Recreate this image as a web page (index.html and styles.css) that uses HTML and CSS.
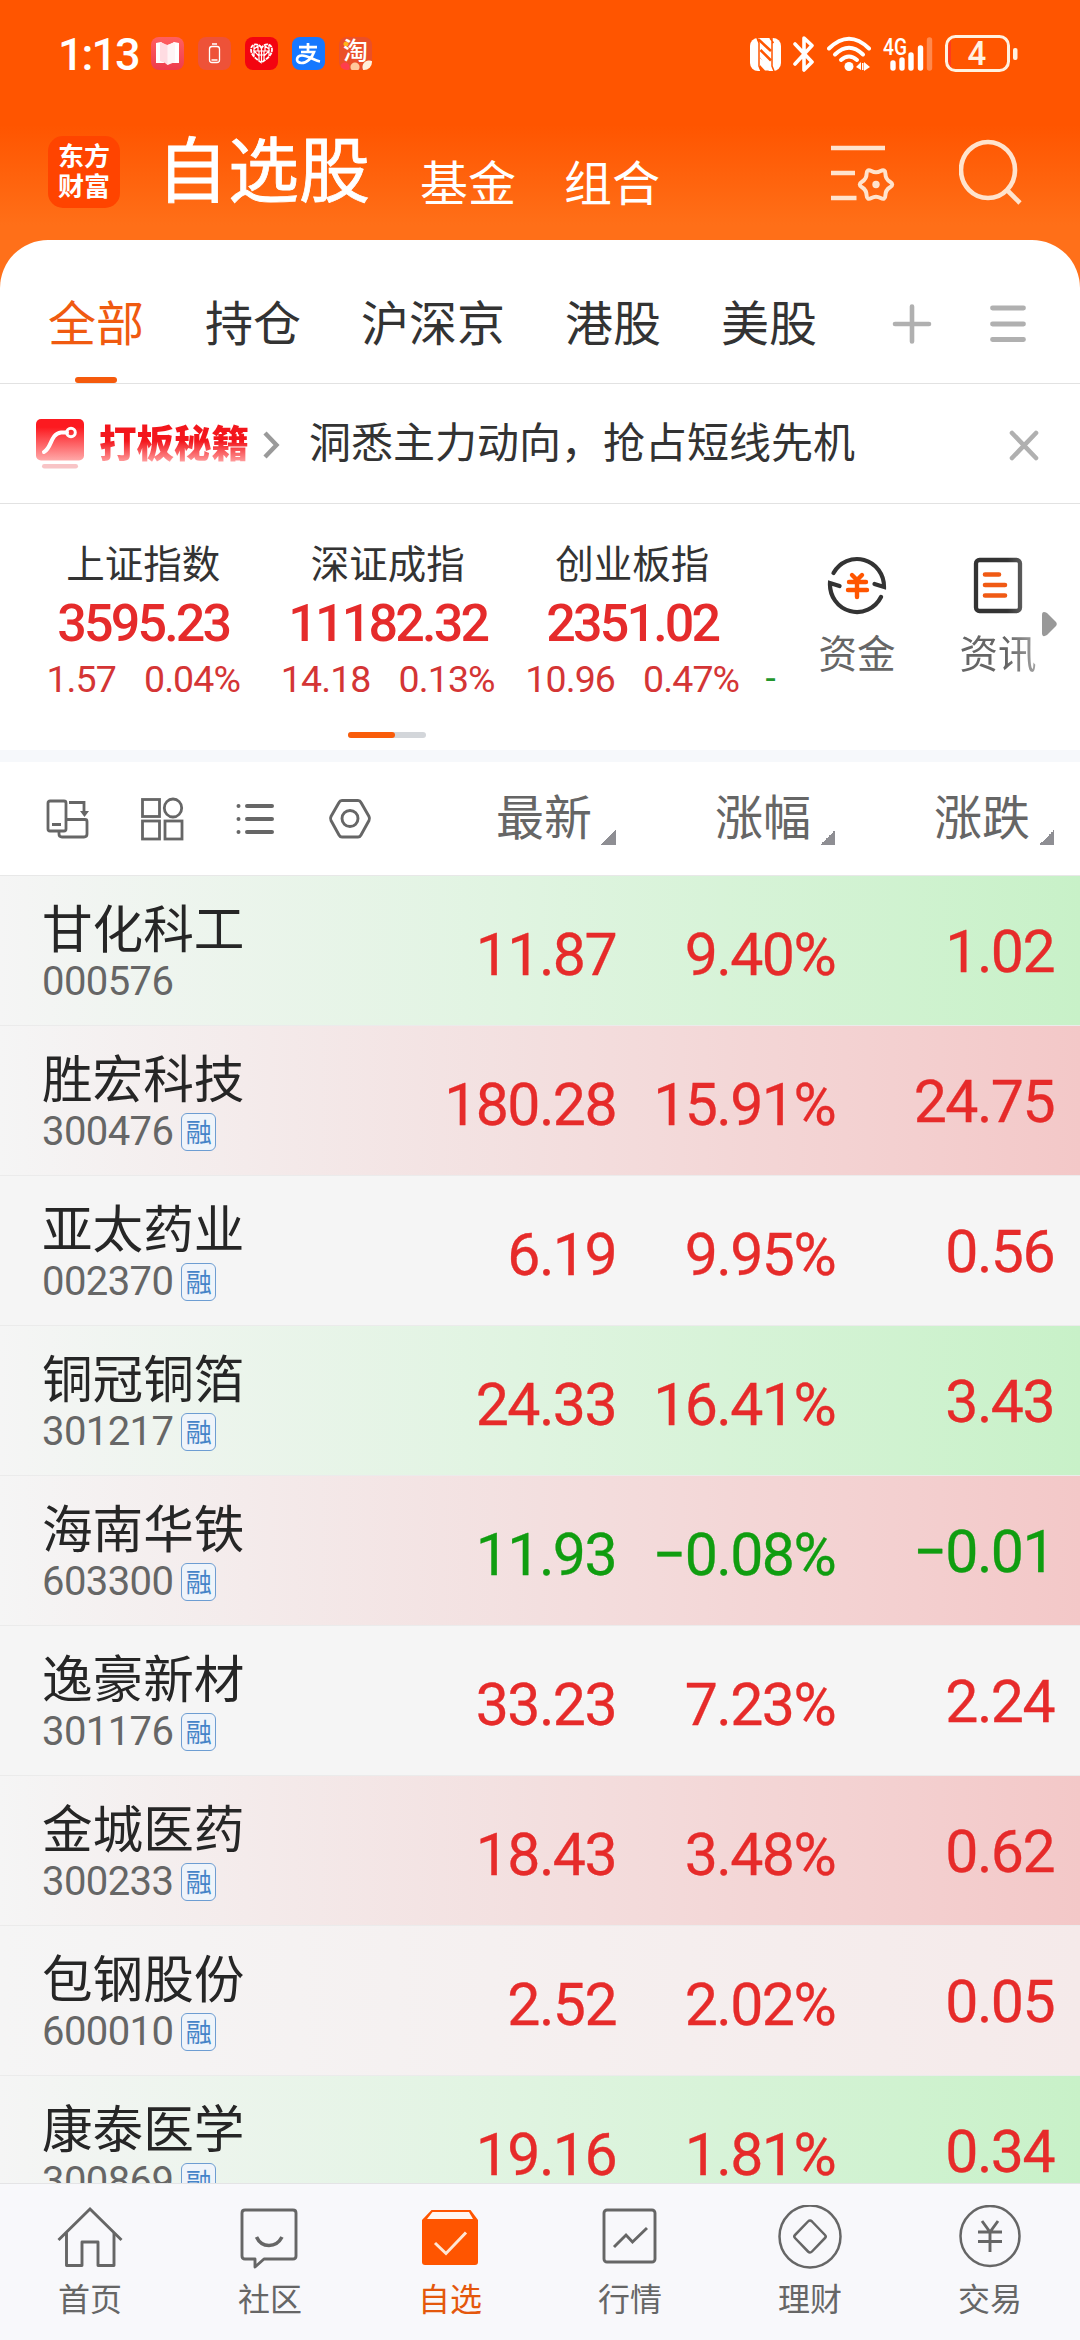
FILE: index.html
```html
<!DOCTYPE html>
<html lang="zh-CN">
<head>
<meta charset="utf-8">
<title>自选股</title>
<link rel="stylesheet" href="styles.css">
</head>
<body>
<div class="app">
  <header class="header">
    <div class="status">
      <span class="clock">1:13</span>
      <div class="notices">
        <svg width="33" height="33" viewBox="0 0 33 33"><defs><linearGradient id="bk" x1="0" y1="0" x2="0" y2="1"><stop offset="0" stop-color="#ff6060"/><stop offset="1" stop-color="#ee3c4c"/></linearGradient></defs><rect width="33" height="33" rx="8" fill="url(#bk)"/><path d="M5 6l5-1 3 2v19H5zM28 6l-5-1-3 2v19h8z" fill="#fff"/><path d="M9 5l7.500 3L24 5v19l-5 2-2.500 2-2.500-2-5-2z" fill="#ffdce2"/><path d="M16.500 8L24 5v20l-7.500 3z" fill="#fff4f5"/></svg>
        <svg width="33" height="33" viewBox="0 0 33 33"><rect width="33" height="33" rx="8" fill="#ee5238"/><rect x="11.500" y="9.500" width="10" height="16" rx="2.500" fill="none" stroke="#fff" stroke-width="1.300"/><path d="M14 7h5M13.500 23h6" stroke="#fff" stroke-width="1.600"/></svg>
        <svg width="33" height="33" viewBox="0 0 33 33"><rect width="33" height="33" rx="8" fill="#f30410"/><path d="M16.500 11C14 6 6 6 6 12.500c0 6 6 10 10.500 13 4.500-3 10.500-7 10.500-13C27 6 19 6 16.500 11z" fill="none" stroke="#fff" stroke-width="1.800" stroke-dasharray="4 .7"/><path d="M9 8v11M9 12l4-3v5H9l5 5v4M16.500 11v14M14 14h5v4h-5zM24 8v11M24 12l-4-3v5h4l-5 5v4" fill="none" stroke="#fff" stroke-width="1.200"/></svg>
        <svg width="33" height="33" viewBox="0 0 33 33"><rect width="33" height="33" rx="8" fill="#1678ff"/><path d="M7 10.200h18M16 6v9M9 15h13c-2 6-7 11-12.500 11C3 26 4 18.500 10 18.500c6 0 12 5 18 6" fill="none" stroke="#fff" stroke-width="2.700"/></svg>
        <span class="tao">淘</span>
      </div>
      <div class="signals">
        <svg width="31" height="33" viewBox="0 0 31 33"><rect width="31" height="33" rx="8" fill="#fff"/><path d="M7 0l2 5v23l2 5M22 0v28l2 5M20 0l3.500 5" fill="none" stroke="#ff5500" stroke-width="1.500"/><path d="M8 1l13 12M10.500 12L21 22.500" stroke="#ff5500" stroke-width="2.600"/><path d="M10 19.500V33h9z" fill="#ff5500"/><path d="M10 20l12 12.500h-7L10 27z" fill="#fff"/></svg>
        <svg width="22" height="36" viewBox="0 0 22 36"><path d="M2 8l17 18-8 8V2l8 7.500L2 28" fill="none" stroke="#fff" stroke-width="3.600" stroke-linejoin="round" stroke-linecap="round"/></svg>
        <svg width="44" height="36" viewBox="0 0 44 36"><g fill="none" stroke="#fff" stroke-width="4" stroke-linecap="round"><path d="M2 12.500Q22-7 42 12.500"/><path d="M8 18.500Q22 5 36 18.500"/><path d="M14 24Q22 17 30 24"/></g><circle cx="22" cy="30.500" r="4.500" fill="#fff"/><path d="M29 31l5-5v8zM37 26l6 5-6 4zM35 27h1.500v7H35z" fill="#fff"/></svg>
        <svg class="cell" width="50" height="36" viewBox="0 0 50 36"><g stroke="#fff" stroke-width="5.400" stroke-linecap="round"><path d="M10 27v5M19 24v8M28 19v13M37.500 12v20"/><path d="M46.500 4v28" opacity=".3"/></g><text x="0" y="18.500" class="net" textLength="24" lengthAdjust="spacingAndGlyphs">4G</text></svg>
        <svg width="73" height="38" viewBox="0 0 73 38"><path d="M6 5q-3 3-3 14t3 14z" fill="#ff3b1f"/><rect x="1.500" y="1.500" width="62" height="34" rx="9" fill="none" stroke="#fff2e0" stroke-width="3"/><rect x="68" y="13" width="4.500" height="12" rx="2" fill="#fff2e0"/><text x="32" y="30" class="lvl" text-anchor="middle">4</text></svg>
      </div>
    </div>
    <div class="topbar">
      <div class="logo">东方<br>财富</div>
      <span class="title">自选股</span>
      <span class="sub">基金</span>
      <span class="sub">组合</span>
      <svg class="manage" width="64" height="58" viewBox="0 0 64 58" fill="none" stroke="#ffe3cd" stroke-width="4.600"><path d="M0 3h54M0 28h24M0 53h25.500"/><path d="M59 42.250Q54.500 45 54.400 50.250Q54.250 55.500 49.600 53Q45 50.500 40.400 53Q35.750 55.500 35.600 50.250Q35.500 45 31 42.250Q26.500 39.500 31 36.750Q35.500 34 35.600 28.750Q35.750 23.500 40.400 26Q45 28.500 49.600 26Q54.250 23.500 54.400 28.750Q54.500 34 59 36.750Q63.500 39.500 59 42.250z" stroke-width="4" stroke-linejoin="round"/><circle cx="45" cy="39.500" r="3.700" fill="#ffe3cd" stroke="none"/></svg>
      <svg width="64" height="66" viewBox="0 0 64 66" fill="none" stroke="#ffe3cd" stroke-width="4.600"><ellipse cx="29" cy="31" rx="27" ry="28"/><path d="M48 51l13 13"/></svg>
    </div>
  </header>

  <main class="sheet">
    <nav class="tabs">
      <span class="tab on">全部</span><span class="tab">持仓</span><span class="tab">沪深京</span><span class="tab">港股</span><span class="tab">美股</span>
      <svg class="plus" width="40" height="40" viewBox="0 0 40 40" stroke="#b0b0b0" stroke-width="4.600" stroke-linecap="round"><path d="M3 20h34M20 2.500v35"/></svg>
      <svg class="menu" width="36" height="38" viewBox="0 0 36 38" stroke="#b0b0b0" stroke-width="4.800" stroke-linecap="round"><path d="M2.500 3h31M2.500 19h31M2.500 34.500h31"/></svg>
    </nav>

    <section class="promo">
      <svg class="promo-logo" width="48" height="50" viewBox="0 0 48 50"><defs><linearGradient id="pl" x1="0" y1="0" x2="0" y2="1"><stop offset=".2" stop-color="#fc1a20"/><stop offset="1" stop-color="#ffa9a9"/></linearGradient></defs><rect width="48" height="41.500" rx="5" fill="url(#pl)"/><path d="M8 33c8-4 6-18 17-19.500h6" fill="none" stroke="#fff" stroke-width="4" stroke-linecap="round"/><circle cx="35" cy="13.500" r="4.300" fill="none" stroke="#fff" stroke-width="3"/><rect x="6" y="45" width="36" height="4.500" rx="2.200" fill="#f8c4c6"/></svg>
      <span class="promo-name">打板秘籍</span>
      <svg class="chev" width="17" height="28" viewBox="0 0 17 28" fill="none" stroke="#9a9a9a" stroke-width="4.400"><path d="M2 2l11.500 12L2 26"/></svg>
      <span class="slogan">洞悉主力动向，抢占短线先机</span>
      <svg class="close" width="30" height="31" viewBox="0 0 30 31" stroke="#b0b0b0" stroke-width="4.600" stroke-linecap="round"><path d="M3 3l24 25M27 3L3 28"/></svg>
    </section>

    <section class="market">
      <div class="indices">
        <div class="index"><div class="iname">上证指数</div><div class="ival">3595.23</div><div class="ichg"><span>1.57</span><span>0.04%</span></div></div>
        <div class="index"><div class="iname">深证成指</div><div class="ival">11182.32</div><div class="ichg"><span>14.18</span><span>0.13%</span></div></div>
        <div class="index"><div class="iname">创业板指</div><div class="ival">2351.02</div><div class="ichg"><span>10.96</span><span>0.47%</span></div></div>
        <div class="next">-</div>
      </div>
      <div class="tools">
        <div class="tool"><svg width="60" height="60" viewBox="0 0 60 60" fill="none"><g stroke="#333" stroke-width="4.200" stroke-linecap="round"><path d="M6.500 18A27 27.500 0 0 1 57 32l-9.500-3" stroke-linejoin="miter"/><path d="M54 42A27 27.500 0 0 1 3 28l9.500 3"/></g><g stroke="#ff5500" stroke-width="4.400" stroke-linecap="round"><path d="M25 20l5 5 5-5M22 27h17M21 35h19M30 26v16"/></g></svg><span>资金</span></div>
        <div class="tool fade"><svg width="60" height="60" viewBox="0 0 60 60" fill="none"><rect x="8" y="5" width="44" height="51" rx="3.500" stroke="#333" stroke-width="4.300"/><path d="M17 19.500h14M17 30h20M17 40.500h20" stroke="#f05a14" stroke-width="4.600" stroke-linecap="round"/></svg><span>资讯</span></div>
        <svg class="more" width="15" height="26" viewBox="0 0 15 26"><path d="M0 4Q0-1 5 2l9 9q1.500 2 0 4l-9 9Q0 27 0 22z" fill="#999"/></svg>
      </div>
      <div class="pager"><i></i></div>
    </section>

    <section class="list">
      <div class="cols">
        <div class="views">
          <svg width="44" height="42" viewBox="0 0 44 42" fill="none" stroke="#666" stroke-width="2.800"><rect x="2" y="3" width="18" height="30" rx="2"/><path d="M20 21.500h19q2 0 2 2V36q0 3-3 3H16q-3 0-3-3v-3M23 4.500h15v10M6 26.500h9"/><path d="M34 13h9l-4.500 6z" fill="#666" stroke="none"/></svg>
          <svg width="44" height="44" viewBox="0 0 44 44" fill="none" stroke="#666" stroke-width="2.800"><rect x="2.500" y="2.500" width="17" height="17"/><rect x="2.500" y="24" width="17" height="18"/><rect x="25" y="24" width="17" height="18"/><ellipse cx="33" cy="11" rx="8.700" ry="9"/></svg>
          <svg width="42" height="34" viewBox="-1 0 42 34" stroke="#666" stroke-width="4" stroke-linecap="round"><path d="M12 4h25M12 17h25M12 30h25M3.500 4v.1M3.500 17v.1M3.500 30v.1"/></svg>
          <svg width="46" height="42" viewBox="-2 0 46 42" fill="none" stroke="#666" stroke-width="2.900"><path d="M14 2.500h16q2 0 3 2l8 14q1 2 0 4l-8 14.500q-1 2-3 2H14q-2 0-3-2L3 22.500q-1-2 0-4l8-14q1-2 3-2z"/><circle cx="22" cy="20.500" r="8"/></svg>
        </div>
        <span class="col">最新</span><span class="col">涨幅</span><span class="col">涨跌</span>
      </div>
      <div class="row green"><div class="who"><b>甘化科工</b><span>000576</span></div><em>11.87</em><em>9.40%</em><em>1.02</em></div>
      <div class="row red"><div class="who"><b>胜宏科技</b><span>300476<i>融</i></span></div><em>180.28</em><em>15.91%</em><em>24.75</em></div>
      <div class="row"><div class="who"><b>亚太药业</b><span>002370<i>融</i></span></div><em>6.19</em><em>9.95%</em><em>0.56</em></div>
      <div class="row green"><div class="who"><b>铜冠铜箔</b><span>301217<i>融</i></span></div><em>24.33</em><em>16.41%</em><em>3.43</em></div>
      <div class="row red down"><div class="who"><b>海南华铁</b><span>603300<i>融</i></span></div><em>11.93</em><em>−0.08%</em><em>−0.01</em></div>
      <div class="row"><div class="who"><b>逸豪新材</b><span>301176<i>融</i></span></div><em>33.23</em><em>7.23%</em><em>2.24</em></div>
      <div class="row red"><div class="who"><b>金城医药</b><span>300233<i>融</i></span></div><em>18.43</em><em>3.48%</em><em>0.62</em></div>
      <div class="row pale"><div class="who"><b>包钢股份</b><span>600010<i>融</i></span></div><em>2.52</em><em>2.02%</em><em>0.05</em></div>
      <div class="row green"><div class="who"><b>康泰医学</b><span>300869<i>融</i></span></div><em>19.16</em><em>1.81%</em><em>0.34</em></div>
    </section>
  </main>

  <footer class="nav">
    <div class="item"><svg width="66" height="66" viewBox="0 0 66 66" fill="none" stroke="#666" stroke-width="2.900"><path d="M1.500 35L33 4l31.500 31"/><path d="M9.500 28v32.500H25V37h16v23.500h16V28" stroke-linejoin="round"/></svg>首页</div>
    <div class="item"><svg width="66" height="66" viewBox="0 0 66 66" fill="none" stroke="#666" stroke-width="2.900" stroke-linejoin="round"><path d="M8 5h48q3 0 3 3v43q0 3-3 3H27l-9 8v-8H8q-3 0-3-3V8q0-3 3-3z"/><path d="M19.500 32q4 8.500 12.500 8.500T45 32" stroke-width="3.600"/></svg>社区</div>
    <div class="item on"><svg width="66" height="66" viewBox="0 0 66 66"><path d="M14.500 5h39l7.500 10v42q0 3-3 3H8q-3 0-3-3V15z" fill="#ff5500"/><path d="M15.500 7H52l4 7H10z" fill="#fff6ef"/><path d="M18 38l11 10.500L49 27.500" fill="none" stroke="#ffe6d3" stroke-width="3"/></svg>自选</div>
    <div class="item"><svg width="66" height="66" viewBox="0 0 66 66" fill="none" stroke="#666" stroke-width="2.900"><rect x="7" y="5" width="51" height="52" rx="3"/><path d="M17 42l12-12 6.500 7L50 23"/></svg>行情</div>
    <div class="item"><svg width="66" height="66" viewBox="0 0 66 66" fill="none" stroke="#666" stroke-width="2.500"><ellipse cx="33" cy="31.500" rx="30.500" ry="31"/><path d="M35 16.500l13 13.500q1.500 1.500 0 3l-13 13.500q-2 2-4 0L18 33q-1.500-1.500 0-3l13-13.500q2-2 4 0z"/></svg>理财</div>
    <div class="item"><svg width="66" height="66" viewBox="0 0 66 66" fill="none" stroke="#666" stroke-width="2.500"><ellipse cx="33" cy="31" rx="29.500" ry="30"/><path d="M25 16l8 11 8-11M21 27h24M21 36.500h24M33 27v20" stroke-width="2.900"/></svg>交易</div>
  </footer>
</div>
</body>
</html>
```

FILE: styles.css
```css
* { box-sizing: border-box; }
body { margin: 0; background: #fff; }
svg { display: block; flex: none; }
.app {
  width: 1080px; height: 2340px; overflow: hidden;
  display: flex; flex-direction: column;
  font-family: "Noto Sans CJK SC", sans-serif; color: #333;
  background: #ff701a;
}

/* header */
.header { flex: none; height: 240px; background: linear-gradient(#ff5500 125px, #ff6f18 225px); color: #fff; }
.status { height: 108px; display: flex; align-items: center; padding: 0 62px 0 58px; }
.clock { width: 93px; font: 500 45px/60px Roboto, sans-serif; letter-spacing: -2px; white-space: nowrap; padding-top: 2px; }
.notices { display: flex; gap: 14px; margin-top: -2px; }
.tao {
  width: 33px; height: 33px; border-radius: 8px; text-align: center; font-size: 25px; font-weight: 500; line-height: 25px;
  background: radial-gradient(circle at 6px 30px, #ff3d4d 4px, transparent 5px), radial-gradient(circle at 16px 30px, #ffc89c 4px, transparent 5px), radial-gradient(circle at 30px 30px, #fff0dc 6px, transparent 7px), radial-gradient(circle at 7px 7px, #ffb41a 2px, transparent 3px), #ea4f28;
}
.signals { display: flex; align-items: center; gap: 12px; margin-left: auto; }
.cell { overflow: visible; }
.net { font: 500 23px Roboto, sans-serif; fill: #fff; }
.lvl { font: 500 33px Roboto, sans-serif; fill: #fff2e0; }
.topbar { height: 132px; display: flex; align-items: flex-start; padding: 0 0 0 48px; }
.logo {
  width: 72px; height: 72px; margin-top: 28px; padding-top: 4px; border-radius: 15px; background: #ff4400;
  font-size: 26px; font-weight: 700; line-height: 30px; text-align: center;
}
.title { margin-left: 37px; width: 219px; font-size: 71px; line-height: 80px; margin-top: 17px; -webkit-text-stroke: .8px #fff; white-space: nowrap; }
.sub { margin-left: 44px; width: 100px; font-size: 48px; line-height: 60px; margin-top: 42px; white-space: nowrap; }
.manage { margin: 37px 64px 0 167px; }
.manage + svg { margin-top: 31px; }

/* white sheet */
.sheet { flex: 1; min-height: 0; background: #fff; border-radius: 48px 48px 0 0; overflow: hidden; }
.tabs { height: 144px; display: flex; align-items: center; gap: 60px; padding: 0 0 0 49px; border-bottom: 1px solid #e2e2e2; }
.tab { font-size: 48px; height: 143px; line-height: 161px; white-space: nowrap; }
.tab.on { margin-left: -1px; margin-right: 1px; color: #f05a10; display: flex; flex-direction: column; align-items: center; }
.tab.on::after { content: ""; width: 42px; height: 6px; border-radius: 3px; background: #f55a0c; margin-top: -24px; }
.plus { margin-left: 15px; margin-top: 24px; }
.menu { margin-left: -2px; margin-top: 24px; }

.promo { height: 120px; display: flex; align-items: center; padding-left: 36px; border-bottom: 1px solid #e2e2e2; }
.promo-name {
  margin-left: 15px; width: 152px; font-size: 37.500px; font-weight: 900; line-height: 56px; margin-top: -6px; white-space: nowrap;
  background: linear-gradient(#f3161c 50%, #ffa0a0 88%); -webkit-background-clip: text; background-clip: text; color: transparent;
}
.chev { margin-left: 12px; margin-top: 3px; }
.slogan { margin-left: 29px; width: 548px; font-size: 42px; line-height: 60px; margin-top: -7px; white-space: nowrap; }
.close { margin-left: 152px; margin-top: 3px; }

.market { height: 258px; display: grid; grid-template-columns: 790px 290px; grid-template-rows: 228px 18px; border-bottom: 12px solid #f6f8fb; }
.indices { display: flex; padding-left: 21px; overflow: hidden; }
.index { width: 244.500px; flex: none; padding-top: 35px; text-align: center; white-space: nowrap; }
.iname { font-size: 38.500px; line-height: 44px; }
.ival { font: 500 52px/64px Roboto, sans-serif; letter-spacing: -2.800px; color: #e52b2b; margin-top: 9px; }
.ichg { display: flex; justify-content: center; gap: 28px; font: 400 37.500px/48px Roboto, sans-serif; letter-spacing: -.9px; color: #d43535; margin-top: -1px; }
.next { padding: 151px 0 0 11px; font: 400 37px/48px Roboto, sans-serif; color: #22962c; }
.tools { display: flex; padding-left: 21px; }
.tool { width: 92px; margin-right: 49px; padding-top: 51px; display: flex; flex-direction: column; align-items: center; font-size: 38.500px; line-height: 50px; color: #666; white-space: nowrap; }
.tool span { margin-top: 11px; }
.fade { margin-right: 0; -webkit-mask-image: linear-gradient(90deg, #000 60%, rgba(0,0,0,.5)); mask-image: linear-gradient(90deg, #000 60%, rgba(0,0,0,.5)); }
.more { margin: 107px 0 0 -2px; }
.pager { grid-column: 1 / 3; margin-left: 348px; width: 78px; height: 6px; border-radius: 3px; background: #d3d6da; }
.pager i { display: block; width: 47px; height: 6px; border-radius: 3px; background: #f95c0a; }

/* quotes */
.cols { height: 114px; display: flex; align-items: center; border-bottom: 1px solid #e8e8e8; }
.views { width: 397px; display: flex; align-items: center; padding-left: 46px; gap: 50px; }
.col { width: 219px; font-size: 48px; line-height: 60px; color: #666; display: flex; align-items: flex-end; justify-content: flex-end; gap: 9px; margin-top: -10px; }
.col::after { content: ""; width: 15px; height: 15px; background: linear-gradient(135deg, transparent 50%, #8e8e93 50%); margin-bottom: -1px; }
.row { height: 150px; display: flex; background: #f5f5f5; border-bottom: 1px solid #ebebeb; color: #e62b2a; }
.green { background: linear-gradient(90deg, #f5f5f5, #dff4e0 50%, #c8f1c8); }
.red { background: linear-gradient(90deg, #f5f5f5, #f3dfdf 50%, #f3c8c8); }
.pale { background: linear-gradient(90deg, #f5f5f5, #f5eaea); }
.down { color: #109d10; }
.who { width: 397px; padding: 22px 0 0 42px; }
.who b { display: block; font-weight: 400; font-size: 50.600px; line-height: 56px; color: #262626; white-space: nowrap; }
.who span { display: flex; align-items: center; font: 400 40px/56px Roboto, sans-serif; letter-spacing: -.6px; color: #666; }
.who i {
  width: 35px; height: 38px; margin-left: 8px; border: 1.500px solid #6d9dd2; border-radius: 6px; background: #eff4fa;
  font: 400 26px/33px "Noto Sans CJK SC", sans-serif; text-align: center; color: #4584c8; letter-spacing: 0;
}
.row em { width: 219px; padding-top: 44px; text-align: right; font: 400 59px/70px Roboto, sans-serif; letter-spacing: -1.600px; white-space: nowrap; -webkit-text-stroke: .3px currentColor; }
.row em:last-child { padding-top: 41px; }

/* bottom bar */
.nav { flex: none; height: 157px; background: #f8f8fb; border-top: 1px solid #e4e4e6; display: flex; }
.item { width: 180px; padding-top: 21px; display: flex; flex-direction: column; align-items: center; font-size: 32px; line-height: 44px; color: #666; }
.item svg { margin-bottom: 4px; }
.item.on { color: #e4570c; }
```
